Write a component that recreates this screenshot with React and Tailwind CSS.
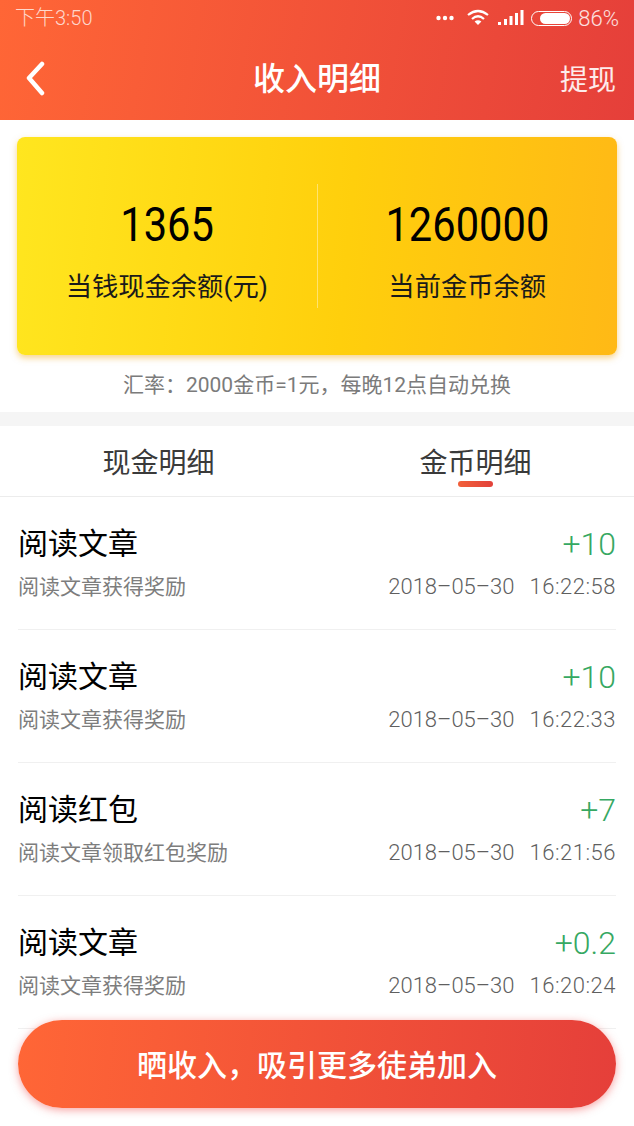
const font = "font-['Roboto','Noto_Sans_CJK_SC',sans-serif]";

const rows = [
  { title: "阅读文章", desc: "阅读文章获得奖励", amount: "+10", time: "16:22:58" },
  { title: "阅读文章", desc: "阅读文章获得奖励", amount: "+10", time: "16:22:33" },
  { title: "阅读红包", desc: "阅读文章领取红包奖励", amount: "+7", time: "16:21:56" },
  { title: "阅读文章", desc: "阅读文章获得奖励", amount: "+0.2", time: "16:20:24" },
];

// Status bar icons
const StatusIcons = () => (
  <div className="flex items-center">
    <svg width="18" height="6" viewBox="0 0 18 6" fill="#fff" className="mr-[12px]">
      <circle cx="2.5" cy="3" r="2.2" />
      <circle cx="9" cy="3" r="2.2" />
      <circle cx="15.5" cy="3" r="2.2" />
    </svg>
    <svg width="24" height="18" viewBox="0 0 24 18" fill="none" stroke="#fff" strokeWidth="2.2" className="mr-[8px]">
      <path d="M2 6 Q12 -2 22 6" />
      <path d="M6 10 Q12 4.5 18 10" />
      <path d="M12 16 L8.6 12.6 Q12 10 15.4 12.6 Z" fill="#fff" stroke="none" />
    </svg>
    <svg width="26" height="16" viewBox="0 0 26 16" fill="#fff" className="mr-[7px]">
      <rect x="0" y="12" width="3" height="3" />
      <rect x="6" y="9" width="3" height="6" />
      <rect x="11.5" y="6" width="3" height="9" />
      <rect x="17" y="3" width="3" height="12" />
      <rect x="22.5" y="0" width="3" height="15" />
    </svg>
    <div className="relative mr-[6px] h-[15px] w-[41px] rounded-full border border-white">
      <div className="absolute top-[1px] right-[1px] bottom-[1px] left-[8px] rounded-full bg-white" />
    </div>
    <span className="text-[22px] font-light text-white/85">86%</span>
  </div>
);

const Balance = ({ value, label }) => (
  <div className="flex flex-1 flex-col items-center pt-[9px]">
    <span className="origin-center scale-x-[0.85] text-[49px] leading-[54px] font-normal text-black">{value}</span>
    <span className="mt-[18px] text-[26.3px] leading-[34px] text-[#1a1a1a]">{label}</span>
  </div>
);

const App = () => {
  return (
    <div className={`relative h-[1126px] w-[634px] overflow-hidden bg-white ${font}`}>
      {/* Header */}
      <header className="flex h-[120px] flex-col bg-[linear-gradient(100deg,#ff6636,#e53f3a)] px-[18px]">
        <div className="-ml-[3px] flex h-[36px] items-center justify-between -mr-[3px]">
          <span className="text-[20px] font-light text-white/75">下午3:50</span>
          <StatusIcons />
        </div>
        <div className="relative flex h-[84px] items-center justify-between pt-[6px]">
          <svg width="24" height="36" viewBox="0 0 24 36" fill="none" stroke="#fff" strokeWidth="4.5" strokeLinecap="round" strokeLinejoin="round" className="ml-[6px] mb-[6px]">
            <path d="M18 4 L5 18 L18 33" />
          </svg>
          <span className="absolute inset-x-0 pb-[4px] text-center text-[32px] font-medium text-white">收入明细</span>
          <span className="text-[28px] text-white/90">提现</span>
        </div>
      </header>

      {/* Balance card */}
      <div className="px-[17px] pt-[17px]">
        <div className="flex h-[218px] items-center rounded-[8px] bg-[linear-gradient(95deg,#ffe61f,#ffcf0c_55%,#ffb916)] shadow-[0_3px_6px_rgba(240,170,30,0.5)]">
          <Balance value="1365" label="当钱现金余额(元)" />
          <div className="h-[124px] w-px bg-white/40" />
          <Balance value="1260000" label="当前金币余额" />
        </div>
      </div>
      <p className="mt-[16px] text-center text-[21px] leading-[28px] text-[#7b7b7b]">汇率：2000金币=1元，每晚12点自动兑换</p>

      <div className="mt-[13px] h-[14px] bg-[#f5f5f5]" />

      {/* Tabs */}
      <div className="flex h-[71px] border-b border-[#ececec]">
        <div className="flex w-[317px] items-center justify-center pt-[6px] text-[28px] text-[#3a3a3a]">现金明细</div>
        <div className="relative flex w-[317px] items-center justify-center pt-[6px] text-[28px] text-[#3a3a3a]">
          金币明细
          <div className="absolute bottom-[9px] left-[141px] h-[6px] w-[35px] rounded-[3px] bg-[linear-gradient(90deg,#f2603a,#e2413a)]" />
        </div>
      </div>

      {/* Records */}
      <div className="px-[18px]">
        {rows.map((row, index) => (
          <div key={index} className="flex h-[133px] flex-col justify-center border-b border-[#f0f0f0] pb-px">
            <div className="flex items-center justify-between">
              <span className="text-[30px] leading-[40px] text-black">{row.title}</span>
              <span className="text-[32px] leading-[40px] font-light text-[#36a862]">{row.amount}</span>
            </div>
            <div className="mt-[8px] flex items-center justify-between">
              <span className="text-[21px] leading-[30px] text-[#7d7d7d]">{row.desc}</span>
              <span className="text-[22px] leading-[30px] font-light text-[#5f5f5f]">
                2018–05–30<span className="ml-[15px] tracking-[0.5px]">{row.time}</span>
              </span>
            </div>
          </div>
        ))}
      </div>

      {/* Floating button */}
      <button className="absolute top-[1020px] left-[18px] flex h-[88px] w-[598px] items-center justify-center rounded-full bg-[linear-gradient(95deg,#ff6636,#e53f3a)] pt-[3px] text-[30px] font-medium text-white shadow-[0_2px_8px_rgba(240,70,70,0.5)]">
        晒收入，吸引更多徒弟加入
      </button>
    </div>
  );
};

export default App;
